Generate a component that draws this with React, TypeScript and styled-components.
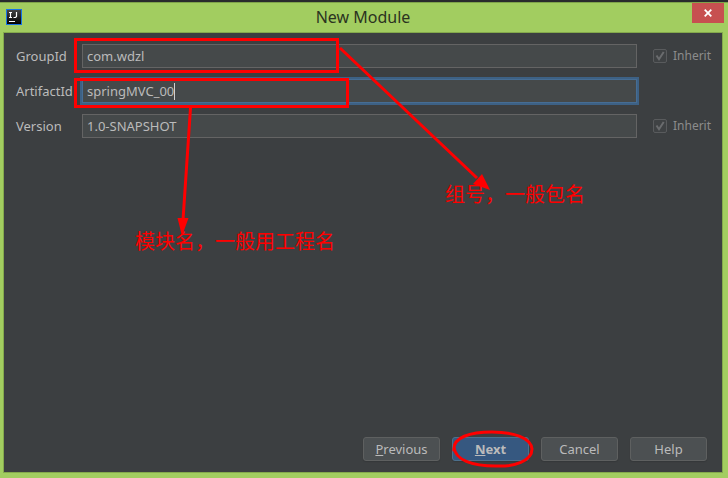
import React from "react";
import styled, { createGlobalStyle, css } from "styled-components";

const GlobalStyle = createGlobalStyle`
  * { box-sizing: border-box; }
  body {
    margin: 0;
    background: #a2cd60;
    font-family: "Noto Sans", "Noto Sans CJK SC", sans-serif;
  }
`;

const RED = "#ff0000";

const Window = styled.div`
  display: flex;
  flex-direction: column;
  min-height: 100vh;
  padding: 0 5px 5px 3px;
  background: #a2cd60;
  border-top: 2px solid #292b2d;
`;

const TitleBar = styled.header`
  display: grid;
  grid-template-columns: 30px 1fr 32px;
  height: 30px;
  margin: 0 -5px 0 -3px;
  padding: 0 4px 0 6px;
  border-top: 1px solid #7fa34a;
`;

const AppIcon = styled.svg`
  width: 16px;
  height: 16px;
  margin-top: 6px;
`;

const Title = styled.h1`
  margin: 0;
  padding-right: 2px;
  color: #2b3320;
  font-size: 16px;
  font-weight: 400;
  line-height: 28px;
  text-align: center;
`;

const CloseButton = styled.button`
  display: flex;
  align-items: center;
  justify-content: center;
  height: 20px;
  padding: 0;
  border: 0;
  background: #c75050;
`;

const Panel = styled.main`
  position: relative;
  flex: 1;
  display: flex;
  flex-direction: column;
  justify-content: space-between;
  padding: 11px 11px 11px 12px;
  border: 1px solid #84a94c;
  background: #3c3f41;
`;

const Form = styled.form`
  display: flex;
  flex-direction: column;
  gap: 11px;
`;

const Row = styled.div`
  display: grid;
  grid-template-columns: 66px 1fr 58px;
  align-items: center;
  height: 24px;
`;

const Label = styled.label`
  color: #bbbbbb;
  font-size: 13px;
  line-height: 24px;
`;

const FieldBox = styled.div`
  position: relative;
  margin-right: 16px;
`;

const TextField = styled.input<{ $active?: boolean }>`
  display: block;
  width: 100%;
  height: 24px;
  padding: 0 4px;
  border: 1px solid #646464;
  outline: 0;
  background: #45494a;
  color: #bbbbbb;
  font: 13px "Noto Sans", sans-serif;
  ${(p) =>
    p.$active &&
    css`
      border-color: #466d94;
      box-shadow: 0 0 0 2px #3d6185;
    `}
`;

const Caret = styled.span`
  position: absolute;
  top: 4px;
  left: 92px;
  width: 1px;
  height: 17px;
  background: #d0d0d0;
`;

const Highlight = styled.span<{ $tall?: boolean }>`
  position: absolute;
  top: ${(p) => (p.$tall ? -6 : -1)}px;
  left: -8px;
  width: ${(p) => (p.$tall ? 265 : 275)}px;
  height: ${(p) => (p.$tall ? 35 : 30)}px;
  border: 3px solid ${RED};
  pointer-events: none;
`;

const Inherit = styled.label`
  display: flex;
  align-items: center;
  gap: 6px;
  color: #8c8c8c;
  font-size: 12px;
  line-height: 24px;
`;

const CheckBox = styled.input`
  appearance: none;
  flex: none;
  width: 14px;
  height: 14px;
  margin: 0;
  border: 1px solid #595b5d;
  border-radius: 2px;
  background: #3f4244
    url("data:image/svg+xml,%3Csvg xmlns='http://www.w3.org/2000/svg' viewBox='0 0 12 12'%3E%3Cpath d='M2.5 5.5L5 9.2L9.7 2' fill='none' stroke='%236a6c6e' stroke-width='2'/%3E%3C/svg%3E")
    center / 12px no-repeat;
`;

const Arrows = styled.svg`
  position: absolute;
  top: 0;
  left: 0;
  width: 500px;
  height: 220px;
  pointer-events: none;
`;

const Note = styled.span<{ $x: number; $y: number }>`
  position: absolute;
  left: ${(p) => p.$x}px;
  top: ${(p) => p.$y}px;
  color: ${RED};
  font: 400 20px/24px "Noto Sans CJK SC", sans-serif;
  white-space: nowrap;
`;

const Actions = styled.footer`
  display: flex;
  justify-content: flex-end;
  gap: 12px;
  padding-right: 4px;
`;

const ButtonSlot = styled.div`
  position: relative;
`;

const ActionButton = styled.button<{ $primary?: boolean }>`
  display: block;
  width: 77px;
  height: 24px;
  padding: 0;
  border: 1px solid ${(p) => (p.$primary ? "#4c708c" : "#5e6060")};
  border-radius: 3px;
  background: ${(p) => (p.$primary ? "#365880" : "#4c5052")};
  box-shadow: 0 1px 1px #35383a;
  color: #bbbbbb;
  font: ${(p) => (p.$primary ? 700 : 400)} 13px/22px "Noto Sans", sans-serif;
`;

const Ring = styled.svg`
  position: absolute;
  top: -8px;
  left: 0;
  width: 84px;
  height: 40px;
  pointer-events: none;
`;

interface FieldProps {
  id: string;
  label: string;
  value: string;
  active?: boolean;
  inherit?: boolean;
  children?: React.ReactNode;
}

function Field({ id, label, value, active, inherit, children }: FieldProps) {
  return (
    <Row>
      <Label htmlFor={id}>{label}</Label>
      <FieldBox>
        <TextField id={id} type="text" defaultValue={value} $active={active} spellCheck={false} />
        {children}
      </FieldBox>
      {inherit && (
        <Inherit>
          <CheckBox type="checkbox" defaultChecked disabled />
          Inherit
        </Inherit>
      )}
    </Row>
  );
}

export default function App() {
  return (
    <>
      <GlobalStyle />
      <Window>
        <TitleBar>
          <AppIcon viewBox="0 0 16 16" aria-hidden="true">
            <defs>
              <linearGradient id="tile" x1="0" y1="0" x2="0" y2="1">
                <stop offset="0" stopColor="#454545" />
                <stop offset="1" stopColor="#000" />
              </linearGradient>
            </defs>
            <rect x="0.5" y="0.5" width="15" height="15" fill="url(#tile)" stroke="#1673e6" />
            <path d="M3 3.5H6M4.5 3.5V8.5M3 8.5H6M10.5 3V7.5L9.5 8.5H7.5" fill="none" stroke="#fff" strokeWidth="1.2" />
            <path d="M3 12.5H9" stroke="#fff" />
          </AppIcon>
          <Title>New Module</Title>
          <CloseButton type="button" aria-label="Close">
            <svg width="8" height="8" viewBox="0 0 8 8">
              <path d="M0.7 0.7L7.3 7.3M7.3 0.7L0.7 7.3" stroke="#fff" strokeWidth="1.8" />
            </svg>
          </CloseButton>
        </TitleBar>
        <Panel>
          <Form>
            <Field id="group" label="GroupId" value="com.wdzl" inherit>
              <Highlight $tall />
            </Field>
            <Field id="artifact" label="ArtifactId" value="springMVC_00" active>
              <Caret />
              <Highlight />
            </Field>
            <Field id="version" label="Version" value="1.0-SNAPSHOT" inherit />
          </Form>
          <Note $x={131} $y={196}>模块名，一般用工程名</Note>
          <Note $x={441} $y={149}>组号，一般包名</Note>
          <Arrows viewBox="4 33 500 220" aria-hidden="true">
            <path d="M340 48L477 178M190.500 108L183 220" fill="none" stroke={RED} strokeWidth="3" />
            <path d="M490 190L473 184L482 174ZM182 236L177.500 218L188.500 218Z" fill={RED} />
          </Arrows>
          <Actions>
            <ActionButton type="button"><u>P</u>revious</ActionButton>
            <ButtonSlot>
              <ActionButton type="button" $primary><u>N</u>ext</ActionButton>
              <Ring viewBox="0 0 84 40" aria-hidden="true">
                <path
                  d="M2 22C0 8 19 3 40 3C62 3 79 9 80 20C80 32 62 38 44 37C20 37 3 31 2 18"
                  fill="none"
                  stroke={RED}
                  strokeWidth="3"
                />
              </Ring>
            </ButtonSlot>
            <ActionButton type="button">Cancel</ActionButton>
            <ActionButton type="button">Help</ActionButton>
          </Actions>
        </Panel>
      </Window>
    </>
  );
}
